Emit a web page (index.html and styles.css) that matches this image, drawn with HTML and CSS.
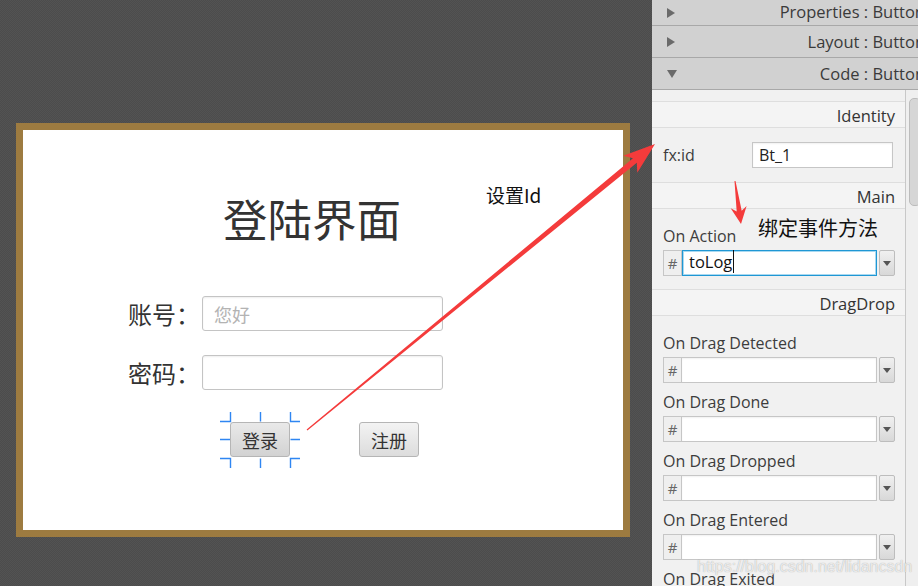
FILE: index.html
```html
<!DOCTYPE html>
<html lang="zh">
<head>
<meta charset="utf-8">
<title>Scene Builder</title>
<link rel="stylesheet" href="styles.css">
</head>
<body>
<div class="stage">
  <div class="window">
    <div class="title">登陆界面</div>
    <div class="form">
      <div class="row"><span class="lbl">账号：</span><input class="inp" type="text" placeholder="您好"></div>
      <div class="row"><span class="lbl">密码：</span><input class="inp" type="text"></div>
    </div>
    <div class="btns">
      <div class="btn-wrap">
        <button class="btn btn-sel">登录</button>
        <svg class="handles" width="82" height="58" viewBox="0 0 82 58">
          <path d="M11.5 1V10.5H1M41.5 1V10.5M71.5 1V10.5H81M1 28.5H11M71.5 28.5H81M1 47.5H11.5V57M41.5 47.5V57M81 47.5H71.5V57" fill="none" stroke="#2f86f2" stroke-width="1.4"/>
        </svg>
      </div>
      <button class="btn">注册</button>
    </div>
  </div>
</div>

<aside class="panel">
  <div class="acc-head first"><span class="tri right"></span><span class="acc-title">Properties : Button</span></div>
  <div class="acc-head"><span class="tri right"></span><span class="acc-title">Layout : Button</span></div>
  <div class="acc-head"><span class="tri down"></span><span class="acc-title">Code : Button</span></div>
  <div class="acc-body">
    <div class="content">
      <div class="sec-head">Identity</div>
      <div class="sec-body id-body">
        <span class="plabel">fx:id</span>
        <div class="idfield">Bt_1</div>
      </div>
      <div class="sec-head">Main</div>
      <div class="sec-body">
        <div class="item">
          <div class="plabel">On Action</div>
          <div class="combo"><span class="hash">#</span><div class="cin focus"><span class="caret">toLog</span></div><span class="dd"></span></div>
        </div>
      </div>
      <div class="sec-head">DragDrop</div>
      <div class="sec-body">
        <div class="item">
          <div class="plabel">On Drag Detected</div>
          <div class="combo"><span class="hash">#</span><div class="cin"></div><span class="dd"></span></div>
        </div>
        <div class="item">
          <div class="plabel">On Drag Done</div>
          <div class="combo"><span class="hash">#</span><div class="cin"></div><span class="dd"></span></div>
        </div>
        <div class="item">
          <div class="plabel">On Drag Dropped</div>
          <div class="combo"><span class="hash">#</span><div class="cin"></div><span class="dd"></span></div>
        </div>
        <div class="item">
          <div class="plabel">On Drag Entered</div>
          <div class="combo"><span class="hash">#</span><div class="cin"></div><span class="dd"></span></div>
        </div>
        <div class="item">
          <div class="plabel">On Drag Exited</div>
          <div class="combo"><span class="hash">#</span><div class="cin"></div><span class="dd"></span></div>
        </div>
      </div>
    </div>
    <div class="scroll"><div class="thumb"></div></div>
  </div>
</aside>

<div class="note note-id">设置Id</div>
<div class="note note-ev">绑定事件方法</div>
<svg class="arrows" width="918" height="586" viewBox="0 0 918 586">
  <polygon fill="#f43b3b" points="307.4,430.5 636.8,162.8 637.3,172.8 655,144 623.3,155.8 633,158.2 306.6,429.5"/>
  <polygon fill="#f43b3b" points="734.5,181.1 736.7,211.5 730.7,208.3 741,224 746.6,206.1 741.7,210.8 735.5,180.9"/>
</svg>
<div class="watermark">https://blog.csdn.net/lidancsdn</div>
</body>
</html>
```
FILE: styles.css
```css
* { box-sizing: border-box; }
html, body { margin: 0; padding: 0; }
body {
  width: 918px;
  height: 586px;
  overflow: hidden;
  display: flex;
  position: relative;
  font-family: "Noto Sans CJK SC", "Noto Sans", sans-serif;
}

/* ---------- design canvas ---------- */
.stage {
  width: 652px;
  height: 586px;
  flex: none;
  padding: 123px 0 0 16px;
  background: #4f4f4f repeating-conic-gradient(#4c4c4c 0 25%, #535353 0 50%) 0 0 / 2px 2px;
}
.window {
  width: 614px;
  height: 414px;
  border: 7px solid #9d7b40;
  background: #fff;
  padding-top: 63px;
  display: flex;
  flex-direction: column;
}
.title {
  margin-left: 200px;
  font-size: 44.5px;
  line-height: 50px;
  height: 50px;
  color: #333;
  font-weight: 400;
}
.form {
  margin-top: 53px;
  margin-left: 105px;
  display: flex;
  flex-direction: column;
  gap: 24px;
}
.row { display: flex; align-items: center; height: 35px; }
.lbl {
  width: 74px;
  font-size: 24px;
  line-height: 35px;
  color: #333;
}
.inp {
  width: 241px;
  height: 35px;
  border: 1px solid #c4c4c4;
  border-radius: 3px;
  background: #fff;
  box-shadow: inset 0 1px 2px rgba(0,0,0,.07);
  font-family: "Noto Sans CJK SC", sans-serif;
  font-size: 18px;
  padding: 0 11px;
  color: #333;
  outline: none;
}
.inp::placeholder { color: #b3b3b3; }
.btns {
  margin-top: 32px;
  margin-left: 207px;
  display: flex;
  gap: 69px;
}
.btn-wrap { position: relative; width: 60px; height: 35px; }
.btn {
  width: 60px;
  height: 35px;
  padding: 0;
  border: 1px solid #b5b5b5;
  border-radius: 3px;
  background: linear-gradient(#f3f3f3, #dcdcdc);
  font-family: "Noto Sans CJK SC", sans-serif;
  font-size: 18px;
  color: #333;
}
.btn-sel { background: linear-gradient(#e9e9e9, #d2d2d2); }
.handles { position: absolute; left: -11px; top: -11px; }

/* ---------- inspector panel ---------- */
.panel {
  width: 266px;
  height: 586px;
  flex: none;
  background: #f1f1f1;
  display: flex;
  flex-direction: column;
  font-family: "Open Sans", "Noto Sans", sans-serif;
  color: #333;
}
.acc-head {
  height: 32px;
  flex: none;
  background: #d1d1d1;
  border-bottom: 1px solid #a8a8a8;
  display: flex;
  align-items: center;
  padding-left: 15px;
  white-space: nowrap;
  overflow: hidden;
}
.acc-head.first { height: 26px; }
.acc-title {
  margin-left: auto;
  margin-right: -7px;
  font-size: 16.5px;
  color: #3a3a3a;
}
.acc-head.first .acc-title { margin-top: -3px; }
.tri { width: 0; height: 0; flex: none; }
.tri.right {
  border-top: 5px solid transparent;
  border-bottom: 5px solid transparent;
  border-left: 8px solid #6a6a6a;
}
.tri.down {
  border-left: 5px solid transparent;
  border-right: 5px solid transparent;
  border-top: 8px solid #6a6a6a;
}
.acc-body { flex: 1; display: flex; min-height: 0; }
.content {
  width: 253px;
  padding-top: 11px;
  overflow: hidden;
}
.scroll {
  width: 13px;
  border-left: 1px solid #c8c8c8;
  background: #efefef;
  padding: 8px 0 0 3px;
}
.thumb {
  width: 12px;
  height: 108px;
  border: 1px solid #bcbcbc;
  border-radius: 5px;
  background: #d6d6d6;
}
.sec-head {
  height: 27px;
  border-top: 1px solid #dedede;
  border-bottom: 1px solid #dedede;
  background: #f4f4f4;
  text-align: right;
  padding: 1px 10px 0 0;
  font-size: 16.5px;
  line-height: 25px;
  color: #333;
}
.sec-body { padding: 17px 0 4px 11px; }
.id-body {
  padding: 14px 12px 14px 11px;
  display: flex;
  align-items: center;
}
.plabel { font-size: 16px; line-height: 20px; color: #3d3d3d; white-space: nowrap; }
.idfield {
  margin-left: auto;
  width: 141px;
  height: 26px;
  border: 1px solid #c6c6c6;
  background: #fff;
  box-shadow: inset 0 1px 2px rgba(0,0,0,.06);
  font-size: 16px;
  line-height: 24px;
  padding-left: 6px;
  color: #222;
}
.item { margin-bottom: 9px; }
.item .plabel { margin-bottom: 4px; }
.combo { display: flex; height: 26px; }
.hash {
  width: 19px;
  height: 26px;
  border: 1px solid #c6c6c6;
  background: #efefef;
  color: #666;
  font-size: 15px;
  line-height: 24px;
  text-align: center;
}
.cin {
  width: 196px;
  height: 26px;
  margin-left: -1px;
  border: 1px solid #c6c6c6;
  background: #fff;
  box-shadow: inset 0 1px 2px rgba(0,0,0,.06);
  font-size: 16.5px;
  line-height: 22px;
  padding-left: 6px;
  color: #111;
}
.cin.focus {
  margin-left: 0;
  width: 195px;
  border-color: #1f97d4;
  box-shadow: inset 0 0 0 1px #a9d9f1;
}
.caret { border-right: 1px solid #111; padding-right: 1px; }
.dd {
  width: 16px;
  height: 26px;
  margin-left: 2px;
  border: 1px solid #bdbdbd;
  border-radius: 2px;
  background: linear-gradient(#f0f0f0, #d8d8d8);
  position: relative;
}
.dd::after {
  content: "";
  position: absolute;
  left: 3px;
  top: 10px;
  border-left: 4px solid transparent;
  border-right: 4px solid transparent;
  border-top: 5px solid #555;
}

/* ---------- screenshot annotations ---------- */
.note {
  position: absolute;
  font-family: "Noto Sans CJK SC", sans-serif;
  color: #111;
  white-space: nowrap;
}
.note-id { left: 486px; top: 182px; font-size: 19px; line-height: 26px; }
.note-ev { left: 758px; top: 214px; font-size: 20px; line-height: 28px; }
.arrows { position: absolute; left: 0; top: 0; pointer-events: none; }
.watermark {
  position: absolute;
  left: 697px;
  top: 557px;
  font-family: "Liberation Sans", Arial, sans-serif;
  font-size: 16px;
  line-height: 20px;
  color: rgba(255,255,255,.75);
  text-shadow: 0 0 1px rgba(0,0,0,.35);
  white-space: nowrap;
}
```
